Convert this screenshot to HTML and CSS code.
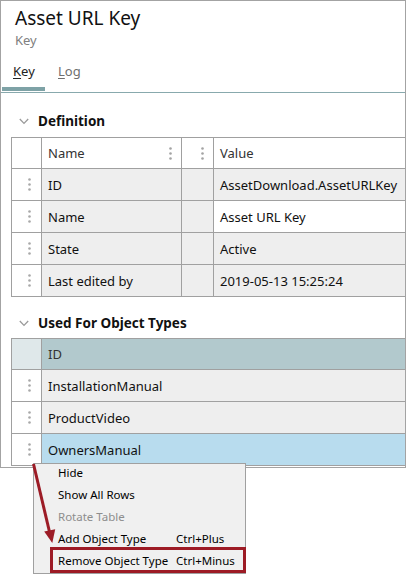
FILE: index.html
```html
<!DOCTYPE html>
<html lang="en">
<head>
<meta charset="utf-8">
<title>Asset URL Key</title>
<link rel="stylesheet" href="styles.css">
</head>
<body>
<div class="win">
  <div class="hdr">
    <div class="title">Asset URL Key</div>
    <div class="subtitle">Key</div>
  </div>
  <div class="tabs">
    <div class="tab active"><u>K</u>ey</div>
    <div class="tab"><u>L</u>og</div>
  </div>

  <div class="sec">
    <svg class="chev" width="10" height="7" viewBox="0 0 10 7"><path d="M0.8 1 L5 5.4 L9.2 1" fill="none" stroke="#9a9a9a" stroke-width="1.3"/></svg>
    <span>Definition</span>
  </div>
  <div class="grid def">
    <div class="c hd"></div>
    <div class="c hd txt">Name<span class="kb"><svg width="3" height="13" viewBox="0 0 3 13"><circle cx="1.5" cy="1.5" r="1.3"/><circle cx="1.5" cy="6.5" r="1.3"/><circle cx="1.5" cy="11.5" r="1.3"/></svg></span></div>
    <div class="c hd"><span class="kb"><svg width="3" height="13" viewBox="0 0 3 13"><circle cx="1.5" cy="1.5" r="1.3"/><circle cx="1.5" cy="6.5" r="1.3"/><circle cx="1.5" cy="11.5" r="1.3"/></svg></span></div>
    <div class="c hd txt">Value</div>

    <div class="c h"><svg width="3" height="13" viewBox="0 0 3 13"><circle cx="1.5" cy="1.5" r="1.3"/><circle cx="1.5" cy="6.5" r="1.3"/><circle cx="1.5" cy="11.5" r="1.3"/></svg></div>
    <div class="c g txt">ID</div>
    <div class="c g"></div>
    <div class="c g txt">AssetDownload.AssetURLKey</div>

    <div class="c h"><svg width="3" height="13" viewBox="0 0 3 13"><circle cx="1.5" cy="1.5" r="1.3"/><circle cx="1.5" cy="6.5" r="1.3"/><circle cx="1.5" cy="11.5" r="1.3"/></svg></div>
    <div class="c g txt">Name</div>
    <div class="c g"></div>
    <div class="c w txt">Asset URL Key</div>

    <div class="c h"><svg width="3" height="13" viewBox="0 0 3 13"><circle cx="1.5" cy="1.5" r="1.3"/><circle cx="1.5" cy="6.5" r="1.3"/><circle cx="1.5" cy="11.5" r="1.3"/></svg></div>
    <div class="c g txt">State</div>
    <div class="c g"></div>
    <div class="c g txt">Active</div>

    <div class="c h"><svg width="3" height="13" viewBox="0 0 3 13"><circle cx="1.5" cy="1.5" r="1.3"/><circle cx="1.5" cy="6.5" r="1.3"/><circle cx="1.5" cy="11.5" r="1.3"/></svg></div>
    <div class="c g txt">Last edited by</div>
    <div class="c g"></div>
    <div class="c g txt">2019-05-13 15:25:24</div>
  </div>

  <div class="sec sec2">
    <svg class="chev" width="10" height="7" viewBox="0 0 10 7"><path d="M0.8 1 L5 5.4 L9.2 1" fill="none" stroke="#9a9a9a" stroke-width="1.3"/></svg>
    <span>Used For Object Types</span>
  </div>
  <div class="grid used">
    <div class="c hd2a"></div>
    <div class="c hd2 txt">ID</div>

    <div class="c h"><svg width="3" height="13" viewBox="0 0 3 13"><circle cx="1.5" cy="1.5" r="1.3"/><circle cx="1.5" cy="6.5" r="1.3"/><circle cx="1.5" cy="11.5" r="1.3"/></svg></div>
    <div class="c g txt">InstallationManual</div>

    <div class="c h"><svg width="3" height="13" viewBox="0 0 3 13"><circle cx="1.5" cy="1.5" r="1.3"/><circle cx="1.5" cy="6.5" r="1.3"/><circle cx="1.5" cy="11.5" r="1.3"/></svg></div>
    <div class="c g txt">ProductVideo</div>

    <div class="c h"><svg width="3" height="13" viewBox="0 0 3 13"><circle cx="1.5" cy="1.5" r="1.3"/><circle cx="1.5" cy="6.5" r="1.3"/><circle cx="1.5" cy="11.5" r="1.3"/></svg></div>
    <div class="c sel txt">OwnersManual</div>
  </div>
</div>

<div class="menu">
  <div class="mi"><span class="ml">Hide</span><span class="ms"></span></div>
  <div class="mi"><span class="ml">Show All Rows</span><span class="ms"></span></div>
  <div class="mi dis"><span class="ml">Rotate Table</span><span class="ms"></span></div>
  <div class="mi"><span class="ml">Add Object Type</span><span class="ms">Ctrl+Plus</span></div>
  <div class="mi"><span class="ml">Remove Object Type</span><span class="ms">Ctrl+Minus</span></div>
</div>
<div class="hl"></div>
<svg class="arrow" width="407" height="574" viewBox="0 0 407 574">
  <line x1="33.5" y1="464" x2="50" y2="534" stroke="#9c1c26" stroke-width="3"/>
  <polygon points="52.3,543 44.2,531.5 55.2,529.2" fill="#9c1c26"/>
</svg>
</body>
</html>
```

FILE: styles.css
```css
* { box-sizing: border-box; }
html, body { margin: 0; padding: 0; background: #fff; }
body {
  position: relative;
  width: 407px;
  height: 574px;
  overflow: hidden;
  font-family: "Noto Sans", "Open Sans", sans-serif;
  color: #111;
}
.win {
  width: 406px;
  height: 468px;
  border: 1px solid #a3a3a3;
  overflow: hidden;
}
.hdr { padding: 5px 0 0 14px; }
.title {
  font-size: 19px;
  line-height: 24px;
  color: #111;
}
.subtitle {
  margin-top: 2px;
  font-size: 13px;
  line-height: 16px;
  color: #808080;
}
.tabs {
  display: flex;
  margin-top: 15px;
  padding-bottom: 1px;
  border-bottom: 1px solid #88a9ad;
}
.tab {
  font-size: 13px;
  line-height: 16px;
  padding: 0 0 8px 13px;
  border-bottom: 4px solid transparent;
  color: #6f6f6f;
}
.tab u { text-decoration-thickness: 1px; text-underline-offset: 2px; }
.tab.active {
  margin-left: 1px;
  width: 43px;
  padding-left: 11px;
  color: #222;
  border-bottom-color: #7ea2a6;
}
.sec {
  display: flex;
  align-items: center;
  padding: 19px 0 7px 18px;
  font-size: 13.5px;
  font-weight: 700;
  line-height: 18px;
  color: #111;
}
.sec .chev { margin-right: 9px; margin-top: 1px; }
.sec2 { padding-top: 17px; padding-bottom: 6px; }
.grid {
  display: grid;
  margin-left: 10px;
  gap: 1px;
  padding: 1px 0 1px 1px;
  background: #a0a0a0;
}
.def {
  grid-template-columns: 29px 139px 31px 1fr;
  grid-template-rows: 30px repeat(4, 31px);
}
.used {
  grid-template-columns: 29px 1fr;
  grid-template-rows: 30px repeat(3, 31px);
}
.c {
  display: flex;
  align-items: center;
  font-size: 13px;
  line-height: 16px;
  white-space: nowrap;
  overflow: hidden;
  min-width: 0;
}
.txt { padding-left: 6px; }
.hd { background: #fff; color: #333; justify-content: space-between; }
.hd .kb { display: flex; margin-left: auto; padding-right: 9px; }
.hd .kb svg { fill: #a3a3a3; }
.h { background: #fff; justify-content: flex-end; padding-right: 10px; }
.h svg { fill: #a8a8a8; }
.g { background: #eeeeee; }
.w { background: #fff; }
.hd2a { background: #dfe8ea; }
.hd2 { background: #b2c9cd; color: #333; }
.sel { background: #b8dcee; }

.menu {
  position: absolute;
  left: 33px;
  top: 463px;
  width: 213px;
  height: 111px;
  border: 1px solid #a0a0a0;
  background: #f0f0f0;
  font-size: 11.5px;
  color: #000;
}
.mi {
  display: flex;
  height: 22px;
  line-height: 18px;
}
.ml { width: 142px; padding-left: 24px; }
.ms { flex: 1; }
.mi.dis { color: #8d8d8d; }
.hl {
  position: absolute;
  left: 50px;
  top: 547px;
  width: 196px;
  height: 26px;
  border: 3px solid #9d1b25;
}
.arrow {
  position: absolute;
  left: 0;
  top: 0;
  pointer-events: none;
}
```
